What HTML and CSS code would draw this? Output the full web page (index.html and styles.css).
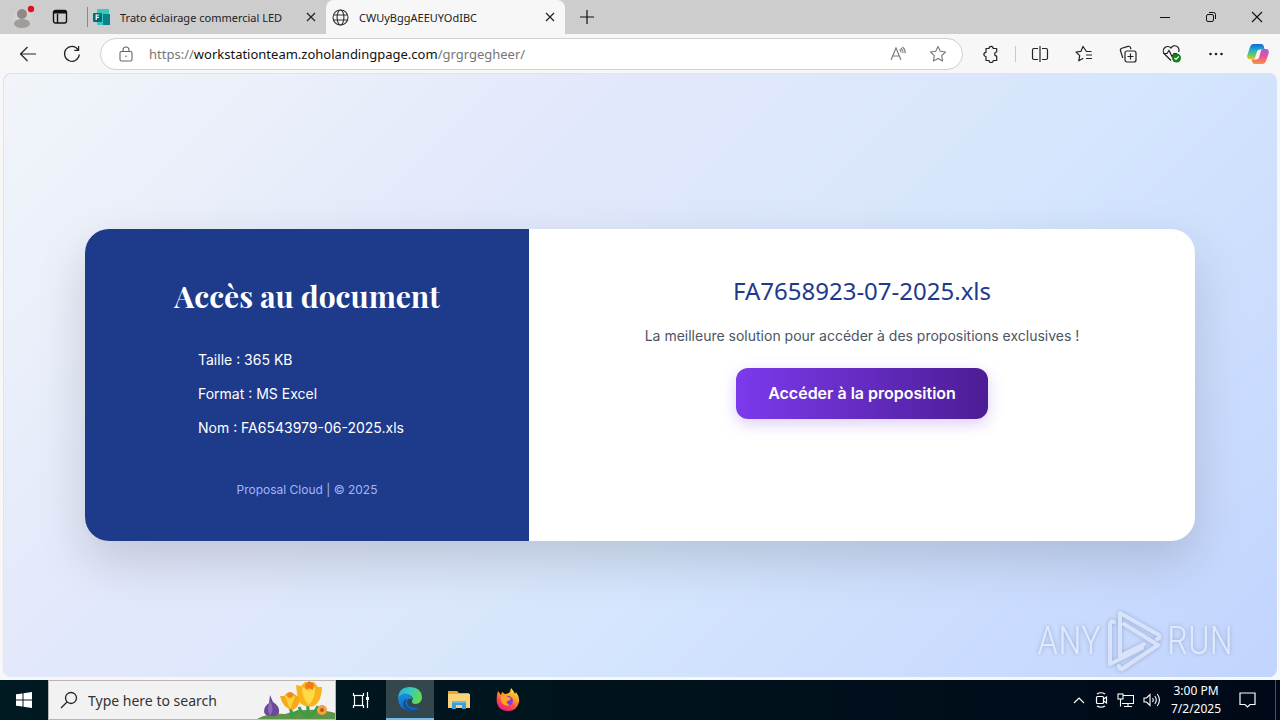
FILE: index.html
```html
<!DOCTYPE html>
<html lang="fr">
<head>
  <meta charset="UTF-8">
  <title>CWUyBggAEEUYOdIBC</title>
  <link rel="stylesheet" href="styles.css">
</head>

<body>
<!-- tabs -->
<header class="tabBar">
  <button class="profile" aria-label="Profile">
    <svg width="24" height="24" viewBox="0 0 24 24">
      <circle cx="10" cy="13" r="10" fill="#d4d2d0"/>
      <circle cx="10" cy="9" r="5" fill="#908a87"/>
      <ellipse cx="10" cy="18.5" rx="8" ry="4.5" fill="#a19c98"/>
      <circle cx="19" cy="4" r="3.2" fill="#e0101e"/>
    </svg>
  </button>
  <button class="workspaces" aria-label="Tab actions">
    <svg width="16" height="16" viewBox="0 0 16 16" fill="none" stroke="#111" stroke-width="1.4">
      <rect x="1.5" y="1.5" width="13" height="12.5" rx="2"/>
      <path d="M2 3h12" stroke-width="3"/><path d="M5.5 5v9"/>
    </svg>
  </button>
  <div class="tab">
    <svg width="17" height="17" viewBox="0 0 17 17">
      <rect x="4" y="0" width="12" height="16" rx="1" fill="#37c6c0"/>
      <path d="M10 5h7v11h-7z" fill="#0d8387"/>
      <rect x="0" y="4" width="9" height="9" rx="1" fill="#036c70"/>
      <path d="M3.2 11V6H6.3M3.2 8.4H6" stroke="#fff" stroke-width="1.2" fill="none"/>
    </svg>
    <span class="tabTitle">Trato éclairage commercial LED</span>
    <button aria-label="Close tab"><svg width="10" height="10" viewBox="0 0 10 10"><path d="M1 1l8 8M9 1l-8 8" stroke="#222" stroke-width="1.2"/></svg></button>
  </div>
  <div class="tab active">
    <svg width="17" height="17" viewBox="0 0 17 17" fill="none" stroke="#333" stroke-width="1.1">
      <circle cx="8.5" cy="8.5" r="7.5"/><ellipse cx="8.5" cy="8.5" rx="3.4" ry="7.5"/>
      <path d="M1.7 6h13.6M1.7 11h13.6"/>
    </svg>
    <span class="tabTitle">CWUyBggAEEUYOdIBC</span>
    <button aria-label="Close tab"><svg width="10" height="10" viewBox="0 0 10 10"><path d="M1 1l8 8M9 1l-8 8" stroke="#222" stroke-width="1.2"/></svg></button>
  </div>
  <button class="newTab" aria-label="New tab"><svg width="14" height="14" viewBox="0 0 14 14"><path d="M7 0v14M0 7h14" stroke="#111" stroke-width="1.2"/></svg></button>
  <div class="windowButtons">
    <button aria-label="Minimize"><svg width="12" height="12" viewBox="0 0 12 12"><path d="M1 6.5h10" stroke="#111"/></svg></button>
    <button aria-label="Restore"><svg width="12" height="12" viewBox="0 0 12 12" fill="none" stroke="#111"><rect x="1.5" y="3.5" width="7" height="7" rx="1.5"/><path d="M4 1.5h4.5a2 2 0 0 1 2 2V8"/></svg></button>
    <button aria-label="Close"><svg width="12" height="12" viewBox="0 0 12 12"><path d="M1 1l10 10M11 1L1 11" stroke="#111" stroke-width="1.1"/></svg></button>
  </div>
</header>

<!-- address bar -->
<nav class="toolbar">
  <button class="toolIcon" aria-label="Back"><svg width="18" height="16" viewBox="0 0 18 16" fill="none" stroke="#222" stroke-width="1.2"><path d="M17 8H1.5M8.5 1l-7 7 7 7"/></svg></button>
  <button class="toolIcon" aria-label="Refresh"><svg width="18" height="18" viewBox="0 0 18 18" fill="none" stroke="#222" stroke-width="1.2"><path d="M16.3 9.5A7.4 7.4 0 1 1 15 4.6M15.6 1v4.3h-4.3"/></svg></button>
  <div class="address">
    <svg width="14" height="16" viewBox="0 0 14 16" fill="none" stroke="#666" stroke-width="1.1"><rect x="1" y="5.5" width="12" height="9.5" rx="1.5"/><path d="M4 5.5V4a3 3 0 0 1 6 0v1.5"/><circle cx="7" cy="10.2" r=".8" fill="#666" stroke="none"/></svg>
    <span class="url">https://<b>workstationteam.zoholandingpage.com</b>/grgrgegheer/</span>
    <button aria-label="Read aloud"><svg width="17" height="16" viewBox="0 0 17 16" fill="none" stroke="#777" stroke-width="1.1"><path d="M1 14L6 2l5 12M2.8 10h6.5M9.5 3.5a3 3 0 0 1 1.5 3M10.8 2a6 6 0 0 1 2.2 5M12.5.8a8 8 0 0 1 2.7 6.5"/></svg></button>
    <button aria-label="Add to favorites"><svg width="18" height="18" viewBox="0 0 18 18" fill="none" stroke="#777" stroke-width="1.1" stroke-linejoin="round"><path d="M9 1.5l2.3 4.8 5.2.7-3.8 3.7.9 5.3L9 13.5 4.4 16l.9-5.3L1.5 7l5.2-.7z"/></svg></button>
  </div>
  <div class="tools">
    <button aria-label="Extensions"><svg width="18" height="18" viewBox="0 0 18 18" fill="none" stroke="#222" stroke-width="1.2" stroke-linejoin="round"><path d="M4 3.500H7a2.100 2.100 0 0 1 4.200 0h3.500V7a2 2 0 1 0 0 4v4.500H11.200a2.100 2.100 0 0 1-4.200 0H4V11.500a2.100 2.100 0 0 1 0-4.200z"/></svg></button>
    <span class="divider"></span>
    <button aria-label="Split screen"><svg width="18" height="18" viewBox="0 0 18 18" fill="none" stroke="#222" stroke-width="1.2"><path d="M9 1v16M7 3.5H3A1.5 1.5 0 0 0 1.5 5v8A1.5 1.5 0 0 0 3 14.5h4M11 3.5h4A1.5 1.5 0 0 1 16.5 5v8a1.5 1.5 0 0 1-1.5 1.5h-4"/></svg></button>
    <button aria-label="Favorites"><svg width="18" height="18" viewBox="0 0 18 18" fill="none" stroke="#222" stroke-width="1.2" stroke-linejoin="round"><path d="M16.5 6.5h-5L8 1.5 6 6.3 1 7l3.7 3.6-.9 5.2 4.5-2.5M11 10h6M11 13.5h6"/></svg></button>
    <button aria-label="Collections"><svg width="18" height="18" viewBox="0 0 18 18" fill="none" stroke="#222" stroke-width="1.2"><rect x="6" y="6" width="11" height="11" rx="2"/><path d="M11.5 8.5v6M8.5 11.5h6M3.8 13L1.5 5.8a2 2 0 0 1 1.3-2.5L9 1.4a2 2 0 0 1 2.5 1.3l.5 1.5"/></svg></button>
    <button aria-label="Browser essentials"><svg width="20" height="18" viewBox="0 0 20 18" fill="none" stroke="#222" stroke-width="1.2"><path d="M9 15.5L2.5 9A4.200 4.200 0 0 1 9 3a4.200 4.200 0 0 1 7.500 4M1 8.500h4l2-3 3 6 2-3h3"/><circle cx="14.5" cy="13" r="4.5" fill="#12801b" stroke="none"/><path d="M12.500 13l1.500 1.500 2.700-3" stroke="#fff"/></svg></button>
    <button aria-label="More"><svg width="18" height="18" viewBox="0 0 18 18" fill="#222"><circle cx="3.5" cy="9" r="1.3"/><circle cx="9" cy="9" r="1.3"/><circle cx="14.5" cy="9" r="1.3"/></svg></button>
    <button aria-label="Copilot">
      <svg width="22" height="20" viewBox="0 0 22 20">
        <defs>
          <linearGradient id="copA" x1="0" y1="0" x2="0" y2="1"><stop offset="0" stop-color="#1667d6"/><stop offset=".45" stop-color="#25b7c9"/><stop offset=".75" stop-color="#7cc84b"/><stop offset="1" stop-color="#f3c72a"/></linearGradient>
          <linearGradient id="copB" x1="0" y1="0" x2="0" y2="1"><stop offset="0" stop-color="#a857e8"/><stop offset=".5" stop-color="#ea5397"/><stop offset="1" stop-color="#fb923c"/></linearGradient>
        </defs>
        <path d="M6 0h8q2.500 0 3 3l.6 2.500H13q-2.500 0-3.200 2.500L8 14q-.6 1.500-2 1.500H3Q-.6 15 .4 11L3 3Q4 0 6 0z" fill="url(#copA)"/>
        <path d="M16 20H8q-2.500 0-3-3l-.3-1.500H9q2.500 0 3.200-2.500L14 6.500Q14.600 5 16 5h3q3.600.5 2.600 4.500L19 17q-1 3-3 3z" fill="url(#copB)"/>
      </svg>
    </button>
  </div>
</nav>

<!-- page -->
<main class="page">
  <div class="card">
    <section class="leftSide">
      <h1>Accès au document</h1>
      <ul>
        <li>Taille : 365 KB</li>
        <li>Format : MS Excel</li>
        <li>Nom : FA6543979-06-2025.xls</li>
      </ul>
      <p class="copyright">Proposal Cloud | © 2025</p>
    </section>
    <section class="rightSide">
      <h2>FA7658923-07-2025.xls</h2>
      <p>La meilleure solution pour accéder à des propositions exclusives !</p>
      <a class="access" href="#">Accéder à la proposition</a>
    </section>
  </div>
  <div class="watermark">
    <span>ANY</span>
    <svg width="58" height="64" viewBox="0 0 58 64" fill="none" stroke="#dce6fb" stroke-width="4" stroke-linecap="round" stroke-linejoin="round">
      <path d="M9 13q-4-2-4 3v39L37 39"/>
      <path d="M15 47V4l39 22q2 3-2 4M15 47l24-12"/>
      <path d="M19 15l34 21-36 24q-3 0-3-3"/>
    </svg>
    <span>RUN</span>
  </div>
</main>

<!-- taskbar -->
<footer class="taskbar">
  <button class="start" aria-label="Start"><svg width="16" height="16" viewBox="0 0 16 16" fill="#fff"><path d="M0 2.3L6.5 1.4v6.1H0zM7.5 1.2L16 0v7.5H7.5zM0 8.5h6.5v6.1L0 13.7zM7.5 8.5H16V16l-8.5-1.2z"/></svg></button>
  <div class="search">
    <svg width="18" height="18" viewBox="0 0 18 18" fill="none" stroke="#222" stroke-width="1.3"><circle cx="11" cy="7" r="5.5"/><path d="M7 11l-6 6"/></svg>
    <input type="text" placeholder="Type here to search" aria-label="Search">
    <svg class="flowers" width="80" height="38" viewBox="0 0 80 38">
      <path d="M2 38q10-6 28-5 16-5 32-4 12 1 18 3v6z" fill="#5d9448"/>
      <path d="M36 36q1-6-1-10M36 36q3-4 8-6M52 36q2-8 0-14M44 26q3 7 8 10 8-4 11-11" stroke="#3e9b45" stroke-width="3" fill="none"/>
      <path d="M15 14l3 7q7 4 6 11-3 4-8 3-6 0-7-4 0-6 5-9z" fill="#6d4899"/>
      <path d="M15 20q-4 8 0 15 5-7 0-15z" fill="#8d69b8"/>
      <path d="M25 15l4 0 3-3 6 0 4 3 3 0q0 11-7 14-10-1-13-14z" fill="#f6a91b"/>
      <path d="M30 15l5 13 5-12-5-3z" fill="#ffd23c"/>
      <circle cx="35" cy="14" r="3" fill="#ef8a1c"/>
      <path d="M41 4l5 1 4-4 9 0 4 5 4 0q0 14-8 19-8 2-14-3-3-6-4-18z" fill="#f8b21d"/>
      <path d="M47 6q0 12 7 18 7-8 6-18l-6 3z" fill="#ffda43"/>
      <path d="M50 4l4-4 5 3-1 6-4-2-3 2z" fill="#ee7a1a"/>
      <circle cx="67" cy="29" r="5" fill="#f4a340"/><circle cx="67" cy="29" r="2" fill="#bb571f"/>
    </svg>
  </div>
  <button class="task" aria-label="Task view"><svg width="18" height="18" viewBox="0 0 18 18" fill="none" stroke="#fff" stroke-width="1.2"><path d="M1.5 2v2.5h10V2M1.5 17v-2.5h10V17M15.5 1v5M15.5 9v8"/><rect x="2.5" y="4.5" width="8" height="10"/><path d="M14 7.500h3" stroke-width="3"/></svg></button>
  <button class="task running" aria-label="Edge">
    <svg width="24" height="24" viewBox="0 0 24 24">
      <defs>
        <linearGradient id="edgeA" x1="0" y1="0" x2="1" y2=".3"><stop offset="0" stop-color="#2ba9df"/><stop offset=".5" stop-color="#37c9bd"/><stop offset="1" stop-color="#62d957"/></linearGradient>
        <linearGradient id="edgeB" x1="0" y1="0" x2="0" y2="1"><stop offset="0" stop-color="#1b8fd8"/><stop offset="1" stop-color="#1466be"/></linearGradient>
      </defs>
      <path d="M0 11Q1 0 12 0q11 0 12 10 0 6-6 7-5 0-4-3 2-3-1-5-5-4-13 2z" fill="url(#edgeA)"/>
      <path d="M0 11Q4 5 10 7q4 1 4 5-4-1-5 2-1 8 12 7-4 4-10 3Q0 22 0 11z" fill="url(#edgeB)"/>
      <path d="M9 12q-4 7 4 10 5 1 9-2-3 4-9 4-8-1-8-7 0-4 4-5z" fill="#11519c"/>
    </svg>
  </button>
  <button class="task" aria-label="File Explorer"><svg width="22" height="20" viewBox="0 0 22 20"><path d="M0 1h9l2 2h10v14H0z" fill="#e9a735"/><path d="M0 4h22v14H0z" fill="#f8d377"/><path d="M4 11h14v8h-4v-4H8v4H4z" fill="#379fdc"/><path d="M4 11h14v2H4z" fill="#65bce8"/></svg></button>
  <button class="task" aria-label="Firefox">
    <svg width="24" height="24" viewBox="0 0 24 24">
      <defs><linearGradient id="fox" x1=".8" y1="0" x2=".3" y2="1"><stop offset="0" stop-color="#fff044"/><stop offset=".4" stop-color="#ff9a26"/><stop offset=".7" stop-color="#ff4848"/><stop offset="1" stop-color="#e71b88"/></linearGradient></defs>
      <path d="M2 3l3 4 1-3 3 2q3 0 5-2l1-4q3 3 4 6l1-2q4 5 3 10-2 9-11 9T1 15Q0 9 2 3z" fill="url(#fox)"/>
      <circle cx="12" cy="13" r="5" fill="#7c43d6"/>
      <path d="M5 8q4-2 7 1l3 1q-1 3-4 3-1 3 3 4-5 2-8-2-2-4-1-7z" fill="#ffa12e"/>
    </svg>
  </button>
  <div class="tray">
    <svg width="12" height="8" viewBox="0 0 12 8" fill="none" stroke="#fff" stroke-width="1.2"><path d="M1 7l5-5 5 5"/></svg>
    <svg width="14" height="16" viewBox="0 0 14 16" fill="none" stroke="#fff" stroke-width="1.2"><rect x="2.5" y="4.5" width="7" height="7" rx="1"/><path d="M9.5 7l3-2v6l-3-2M3 2q4-2.5 8 0M3 14q4 2.5 8 0"/></svg>
    <svg width="17" height="15" viewBox="0 0 17 15" fill="none" stroke="#fff" stroke-width="1.1"><path d="M6 2.5h10.5v8H5M11 10.5v3M7 13.5h8M3.5 6v7.5"/><rect x="1" y="1" width="5" height="5"/></svg>
    <svg width="18" height="14" viewBox="0 0 18 14" fill="none" stroke="#fff" stroke-width="1.1"><path d="M1 5h2.5L7 1.5v11L3.5 9H1zM9.5 5q1.5 2 0 4M11.8 3q3 4 0 8M14.2 1q4.5 6 0 12"/></svg>
    <div class="clock"><span>3:00 PM</span><span>7/2/2025</span></div>
    <svg class="notes" width="17" height="16" viewBox="0 0 17 16" fill="none" stroke="#fff" stroke-width="1.2"><path d="M1 1h15v11.5h-5L8.5 15 6 12.5H1z"/></svg>
    <span class="desktop"></span>
  </div>
</footer>
</body>
</html>
```
FILE: styles.css
```css
:root {
  --chromeGrey: #cdcdcd;
  --toolbarGrey: #f7f7f7;
  --deepBlue: #1e3a8a;
  --white: #fff;
}
* {
  box-sizing: border-box;
}
body {
  display: flex;
  flex-direction: column;
  min-height: 100vh;
  margin: 0;
  background-color: var(--toolbarGrey);
  font-family: 'Noto Sans', 'Open Sans', sans-serif;
  font-size: 12px;
  color: #222;
}
button {
  display: flex;
  align-items: center;
  justify-content: center;
  padding: 0;
  border: 0;
  background: none;
  cursor: pointer;
}
svg {
  display: block;
  flex: none;
}

/* tabs */
.tabBar {
  display: flex;
  align-items: center;
  height: 34px;
  background-color: var(--chromeGrey);
}
.profile {
  width: 24px;
  margin-left: 12px;
}
.workspaces {
  width: 16px;
  margin: 0 19px 0 16px;
}
.tab {
  display: flex;
  align-items: center;
  gap: 10px;
  width: 239px;
  height: 34px;
  padding: 0 10px 0 6px;
}
.tab:not(.active) {
  background: linear-gradient(#888, #888) left center / 1px 20px no-repeat;
}
.tab.active {
  border-radius: 8px 8px 0 0;
  background-color: var(--toolbarGrey);
}
.tabTitle {
  flex: 1;
  font-size: 11px;
  white-space: nowrap;
}
.newTab {
  margin-left: 15px;
}
.windowButtons {
  display: flex;
  margin-left: auto;
}
.windowButtons button {
  width: 46px;
  height: 34px;
}

/* address bar */
.toolbar {
  display: flex;
  align-items: center;
  height: 39px;
  padding: 0 2px 0 6px;
}
.toolIcon {
  width: 44px;
}
.address {
  display: flex;
  flex: 1;
  align-items: center;
  gap: 22px;
  height: 32px;
  margin-left: 6px;
  padding: 0 15px 0 18px;
  border: 1px solid #d0d0d0;
  border-radius: 16px;
  background-color: var(--white);
}
.url {
  flex: 1;
  margin-left: -6px;
  font-size: 13px;
  color: #767676;
}
.url b {
  font-weight: normal;
  color: #111;
}
.tools {
  display: flex;
  align-items: center;
}
.tools button {
  width: 44px;
}
.tools button:first-child {
  margin-left: 6px;
}
.tools button:last-child {
  width: 40px;
}
.divider {
  width: 1px;
  height: 16px;
  margin: 0 2px;
  background-color: #c8c8c8;
}

/* page */
.page {
  position: relative;
  display: flex;
  flex: 1;
  align-items: center;
  margin: 0 3px 3px;
  padding: 20px 82px 0;
  border-radius: 8px;
  background: linear-gradient(135deg, #f1f5f9 0%, #e2e8fb 34%, #d6e6fd 60%, #c1d4fe 100%);
  box-shadow: inset 1px 1px 0 #dfe3ea;
  font-family: Inter, sans-serif;
}
.card {
  display: flex;
  width: 100%;
  min-height: 312px;
  border-radius: 24px;
  overflow: hidden;
  background-color: var(--white);
  box-shadow: 0 20px 50px rgba(0, 0, 0, .15);
}
.leftSide {
  display: flex;
  flex-direction: column;
  align-items: center;
  width: 40%;
  padding: 47px 40px 40px;
  background-color: var(--deepBlue);
  color: var(--white);
}
h1 {
  margin: 0 0 33px;
  font-family: 'Playfair Display', 'Liberation Serif', serif;
  font-size: 30px;
  line-height: 40px;
}
ul {
  width: 218px;
  margin: 0 0 30px;
  padding: 0;
  list-style: none;
  font-size: 14px;
  line-height: 22px;
}
li {
  margin-bottom: 12px;
}
.copyright {
  margin: 0;
  font-size: 12px;
  line-height: 18px;
  color: #a5b4fc;
}
.rightSide {
  flex: 1;
  padding: 44px 40px 40px;
  text-align: center;
}
h2 {
  margin: 0 0 15px;
  font-family: 'Noto Sans', sans-serif;
  font-size: 24px;
  font-weight: normal;
  line-height: 36px;
  color: var(--deepBlue);
}
.rightSide p {
  margin: 0 0 21px;
  font-size: 14px;
  line-height: 23px;
  color: #4b5563;
}
.access {
  display: inline-block;
  padding: 14px 32px;
  border-radius: 12px;
  background: linear-gradient(90deg, #7c3aed, #4c1d95);
  box-shadow: 0 5px 15px rgba(124, 58, 237, .25);
  font-size: 16px;
  font-weight: 600;
  line-height: 23px;
  color: var(--white);
  text-decoration: none;
}
/* sandbox logo over the page */
.watermark {
  position: absolute;
  right: 44px;
  bottom: 4px;
  display: flex;
  align-items: center;
  gap: 4px;
  font-family: 'Roboto Condensed', Roboto, sans-serif;
  font-size: 38px;
  font-weight: 300;
  color: #e6edfc;
  filter: drop-shadow(0 0 2px #8fa0c8);
  opacity: .85;
}

/* taskbar */
.taskbar {
  display: flex;
  height: 40px;
  background: linear-gradient(90deg, #001a22, #00131d 50%, #000918);
}
.start {
  width: 48px;
}
.search {
  display: flex;
  align-items: center;
  gap: 10px;
  width: 288px;
  margin-right: 1px;
  padding-left: 11px;
  border: 1px solid #b9b5b3;
  background-color: #f2f2f2;
}
.search input {
  flex: 1;
  min-width: 0;
  padding: 0;
  border: 0;
  background: none;
  font-family: inherit;
  font-size: 14px;
}
.search input::placeholder {
  color: #333;
}
.flowers {
  margin-left: -10px;
}
.task {
  width: 48px;
  margin-right: 1px;
}
.running {
  border-bottom: 2px solid #76b9ed;
  background-color: #33474d;
}
.tray {
  display: flex;
  align-items: center;
  gap: 9px;
  margin-left: auto;
  color: var(--white);
}
.clock {
  display: flex;
  flex-direction: column;
  width: 52px;
  text-align: center;
  line-height: 18px;
}
.notes {
  margin-left: 8px;
}
.desktop {
  width: 1px;
  height: 40px;
  margin: 0 4px 0 10px;
  background-color: #4b5560;
}
```
